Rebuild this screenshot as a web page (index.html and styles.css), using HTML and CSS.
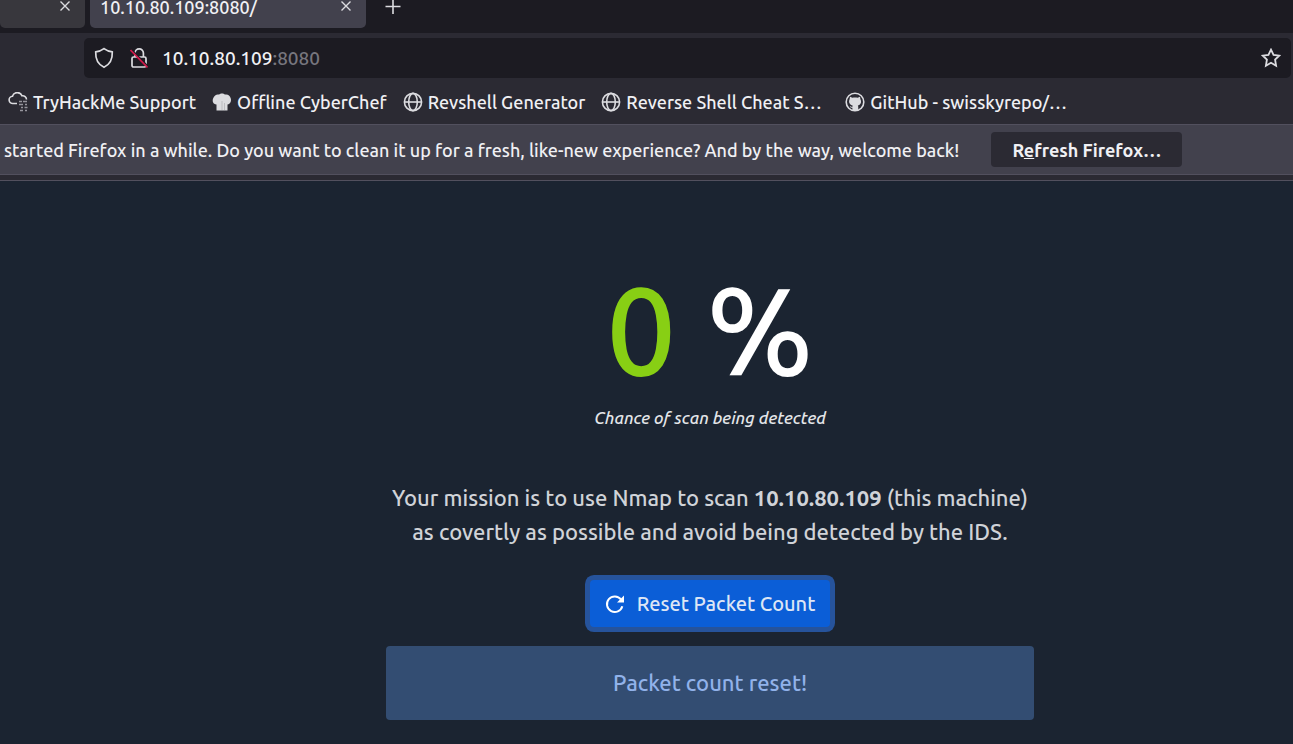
FILE: index.html
```html
<!DOCTYPE html>
<html lang="en">
<head>
<meta charset="utf-8">
<meta name="viewport" content="width=device-width, initial-scale=1">
<title>10.10.80.109:8080/</title>
<link rel="stylesheet" href="styles.css">
</head>
<body>
<header>
  <div class="tabs">
    <div class="tab tab-back">
      <button class="icon-button" type="button" aria-label="Close background tab"><svg width="12" height="12" viewBox="0 0 12 12"><path d="M1.5 1.5l9 9M10.5 1.5l-9 9"/></svg></button>
    </div>
    <div class="tab tab-active">
      <span>10.10.80.109:8080/</span>
      <button class="icon-button" type="button" aria-label="Close tab"><svg width="12" height="12" viewBox="0 0 12 12"><path d="M1.5 1.5l9 9M10.5 1.5l-9 9"/></svg></button>
    </div>
    <button class="icon-button new-tab" type="button" aria-label="New tab"><svg width="16" height="14" viewBox="0 0 16 14"><path d="M8 -1v15M.5 6.500h15"/></svg></button>
  </div>

  <div class="toolbar">
    <div class="address">
      <svg class="shield" width="20" height="22" viewBox="0 0 20 22"><path d="M10 1.600C7.500 3.500 4.800 4.500 1.700 4.900 1.400 12 4 17.500 10 20.200 16 17.500 18.600 12 18.300 4.900 15.200 4.500 12.500 3.500 10 1.600z"/></svg>
      <svg class="lock" width="18" height="22" viewBox="0 0 18 22"><rect x="2" y="10" width="14" height="10" rx="1.500"/><path d="M5 10V6a4.200 4.200 0 0 1 8.400 0v4"/><path class="gap" d="M1.500 2.500l17 17.500"/><path class="slash" d="M.5 3l17 17.500"/></svg>
      <div class="url">10.10.80.109<span>:8080</span></div>
      <button class="icon-button star" type="button" aria-label="Bookmark this page"><svg width="20" height="20" viewBox="0 0 22 22"><path d="M11 1.800l2.800 5.700 6.200.9-4.500 4.400 1.100 6.800-5.600-3.300-5.600 3.300 1.100-6.800L2 8.400l6.200-.9z"/></svg></button>
    </div>
  </div>

  <nav class="bookmarks" aria-label="Bookmarks">
    <a href="#"><svg width="20" height="20" viewBox="0 0 20 20"><path class="line" d="M9 11.500H5a3.600 3.600 0 0 1-.5-7.200A5 5 0 0 1 14 3.800a3.800 3.800 0 0 1 4.500 3.700"/><path class="bits" d="M11 9.500h3M15 9.500h4M11 12.500h4M17 12.500h2M13 15.500h2M16.500 15.500h3M12 18.500h3M17 18.500h2"/></svg>TryHackMe Support</a>
    <a href="#"><svg width="20" height="20" viewBox="0 0 20 20"><path class="chef" d="M4.500 18.500V12.500C1 12.500 0 9 1.200 6.300 2.300 3.200 5 1.800 7 2.600 8.500 1 11.500 1 13 2.600c2.500-.8 5 1 5.700 3.700.9 2.700-.3 5.700-3.200 6.200v6z"/><path class="chef-fold" d="M10 9v9M12.500 11v7"/></svg>Offline CyberChef</a>
    <a href="#"><svg width="20" height="20" viewBox="0 0 20 20"><g class="line"><circle cx="10" cy="10" r="8.600"/><ellipse cx="10" cy="10" rx="4.300" ry="8.600"/><path d="M1.400 10h17.200"/></g></svg>Revshell Generator</a>
    <a href="#" class="truncated"><svg width="20" height="20" viewBox="0 0 20 20"><g class="line"><circle cx="10" cy="10" r="8.600"/><ellipse cx="10" cy="10" rx="4.300" ry="8.600"/><path d="M1.400 10h17.200"/></g></svg>Reverse Shell Cheat S…</a>
    <a href="#" class="truncated"><svg width="20" height="20" viewBox="0 0 20 20"><circle class="line" cx="10" cy="10" r="8.800"/><path class="cat" d="M5 4.800l2.400 1c1.700-.5 3.500-.5 5.200 0l2.400-1 .4 2.500c1.600 3 .2 5.700-2.600 6.200.5.600.5 1.300.5 4.500H7.400v-2.200c-1.400.1-2-.6-2.600-1.600.9 0 1.300.8 2.600.7 0-.6 0-1 .3-1.400-2.900-.4-4.500-3.200-3.100-6.200z"/></svg>GitHub - swisskyrepo/…</a>
  </nav>

  <div class="notice">
    <p>started Firefox in a while. Do you want to clean it up for a fresh, like-new experience? And by the way, welcome back!</p>
    <button type="button" accesskey="e">R<u>e</u>fresh Firefox…</button>
  </div>
</header>

<main>
  <h1><span class="score">0</span> <span>%</span></h1>
  <p class="caption">Chance of scan being detected</p>
  <p class="mission">Your mission is to use Nmap to scan <strong>10.10.80.109</strong> (this machine)<br>as covertly as possible and avoid being detected by the IDS.</p>
  <button class="reset" type="button"><svg width="20" height="20" viewBox="0 0 20 20"><path d="M17.300 12.200A7.800 7.800 0 1 1 16 5.500"/><path class="head" d="M19 1.500v7h-7z"/></svg>Reset Packet Count</button>
  <div class="alert" role="status">Packet count reset!</div>
</main>
</body>
</html>
```
FILE: styles.css
```css
* {
  box-sizing: border-box;
}

body {
  margin: 0;
  min-height: 100vh;
  background: #1b2431;
  color: #f0f0f4;
  font: 500 18px/24px Ubuntu, "Noto Sans", sans-serif;
}

p,
h1 {
  margin: 0;
}

button {
  font: inherit;
  color: inherit;
  border: 0;
  cursor: pointer;
}

svg {
  display: block;
  flex: none;
  fill: none;
  stroke: #dcdce0;
  stroke-width: 2;
}

header {
  background: #2b2a33;
  border-bottom: 1px solid #52505e;
  padding-bottom: 5px;
  white-space: nowrap;
  overflow: hidden;
}

.icon-button {
  display: flex;
  padding: 0;
  background: none;
}

.icon-button svg {
  stroke-width: 1.4;
}

.tabs {
  display: flex;
  align-items: flex-start;
  gap: 5px;
  height: 33px;
  background: #1c1b22;
}

.tab {
  display: flex;
  justify-content: space-between;
  height: 28px;
  border-radius: 0 0 5px 5px;
}

.tab .icon-button {
  height: 12px;
  margin-left: auto;
}

.tab-back {
  width: 85px;
  padding-right: 14px;
  background: #38373d;
}

.tab-active {
  width: 276px;
  padding: 0 14px 0 10px;
  background: #42414d;
}

.tab-active span {
  line-height: 14px;
}

.new-tab {
  margin-left: 14px;
}

.new-tab svg {
  stroke-width: 1.6;
}

.toolbar {
  padding: 5px 2px 6px 84px;
}

.address {
  display: flex;
  align-items: center;
  height: 40px;
  padding: 0 10px;
  border-radius: 5px;
  background: #1c1b22;
}

.shield {
  margin-right: 16px;
}

.shield,
.lock {
  stroke-width: 1.7;
}

.lock .gap {
  stroke: #1c1b22;
}

.lock .slash {
  stroke: #d3194a;
}

.url {
  flex: 1;
  margin-left: 14px;
  font-size: 19px;
}

.url span {
  color: #77767e;
}

.star svg {
  stroke-width: 2;
}

.bookmarks {
  display: flex;
  gap: 16px;
  height: 40px;
  align-items: center;
  padding: 0 8px 5px;
}

.bookmarks a {
  display: flex;
  align-items: center;
  gap: 5px;
  color: inherit;
  text-decoration: none;
}

.bookmarks .truncated {
  min-width: 228px;
}

.bookmarks .line {
  stroke-width: 1.6;
}

.bookmarks .bits {
  stroke: #96959d;
  stroke-width: 1.5;
}

.chef,
.cat {
  fill: #dcdce0;
  stroke: none;
}

.chef-fold {
  stroke: #bcbcc0;
  stroke-width: 1;
}

.notice {
  display: flex;
  align-items: center;
  gap: 32px;
  height: 51px;
  padding: 0 4px;
  border: solid #52505e;
  border-width: 1px 0;
  background: #42414d;
}

.notice button {
  height: 35px;
  padding: 0 21px;
  border-radius: 4px;
  background: #2b2a33;
  font-weight: 700;
}

main {
  display: flex;
  flex-direction: column;
  align-items: center;
  padding: 73px 0 24px 127px;
  text-align: center;
}

h1 {
  display: flex;
  gap: 30px;
  color: #fff;
  font-size: 124px;
  font-weight: 500;
  line-height: 150px;
}

.score {
  color: #88cf14;
}

.caption {
  margin-top: 2px;
  color: #e4e6e9;
  font-size: 17px;
  font-style: italic;
}

.mission {
  margin-top: 51px;
  color: #d0d3d8;
  font-size: 22px;
  line-height: 34px;
}

.mission strong {
  font-weight: 700;
}

.reset {
  display: flex;
  align-items: center;
  gap: 12px;
  height: 47px;
  margin: 31px 0 19px;
  padding: 0 15px;
  border-radius: 4px;
  box-shadow: 0 0 0 5px #26539b;
  background: #0b5ed7;
  color: #dde6f5;
  font-size: 20px;
}

.reset svg {
  stroke: #fff;
}

.reset .head {
  fill: #fff;
  stroke: none;
}

.alert {
  width: 648px;
  max-width: 100%;
  padding: 20px;
  border-radius: 4px;
  background: #334d72;
  color: #91b2ea;
  font-size: 22px;
  line-height: 34px;
}
```
